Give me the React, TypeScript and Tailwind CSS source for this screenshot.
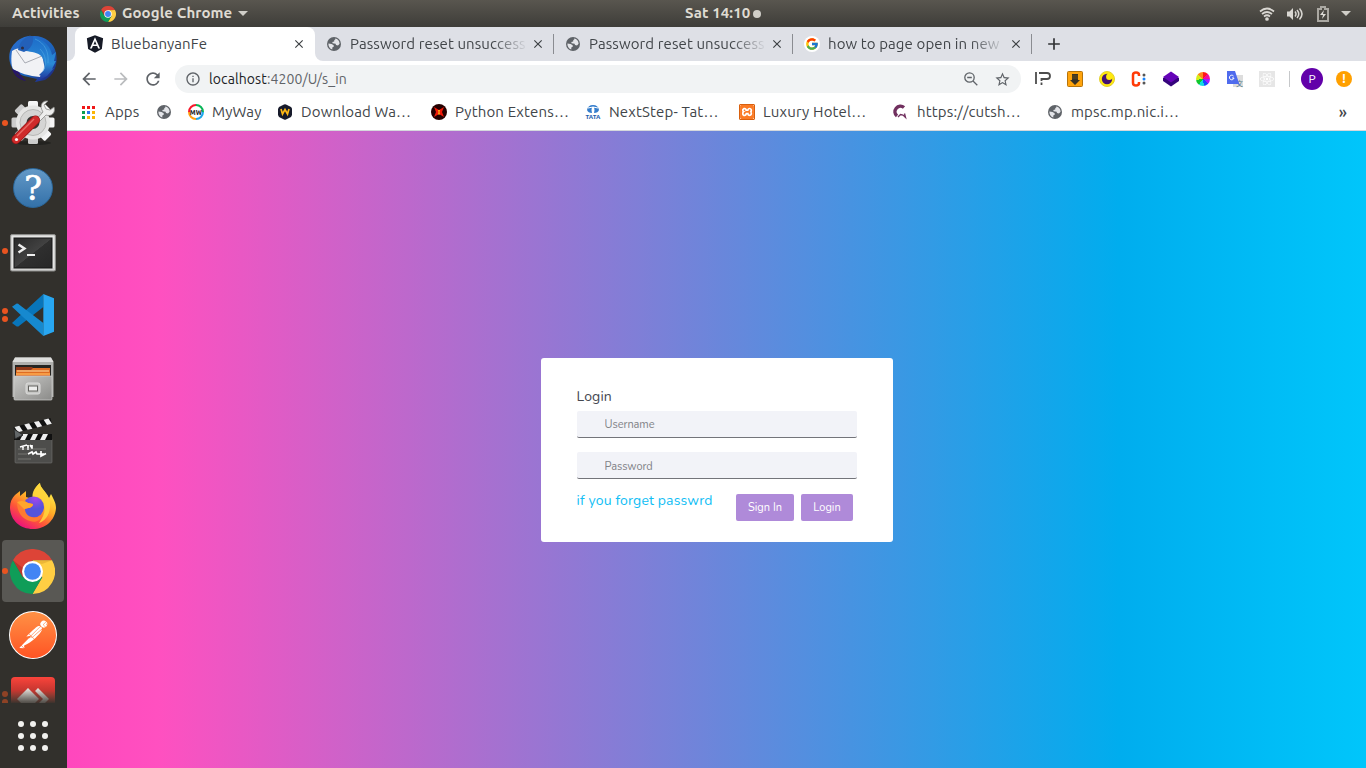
import React, { type ReactNode } from "react";
import { MdArrowBack, MdArrowForward, MdRefresh, MdInfoOutline, MdStarBorder, MdClose, MdAdd } from "react-icons/md";
import { FaAngular, FaReact } from "react-icons/fa";
import { FcGoogle } from "react-icons/fc";
import { SiXampp, SiPostman } from "react-icons/si";

function ChromeLogo({ className }: { className: string }) {
  return (
    <svg viewBox="0 0 48 48" className={className}>
      <path d="M3.2 12A24 24 0 0 1 44.8 12H24L13.6 30Z" fill="#dd4437" />
      <path d="M44.8 12A24 24 0 0 1 24 48L34.4 30L24 12Z" fill="#ffce43" />
      <path d="M24 48A24 24 0 0 1 3.2 12L13.6 30H34.4Z" fill="#0f9d58" />
      <path d="M24 12H44.8L34 16Z" fill="#c98d21" opacity=".35" />
      <path d="M13.6 30L3.2 12L16 22Z" fill="#7d1f19" opacity=".35" />
      <circle cx="24" cy="24" r="11.2" fill="#fff" />
      <circle cx="24" cy="24" r="8.9" fill="#4285f4" />
    </svg>
  );
}

function Globe() {
  return (
    <svg viewBox="0 0 14 14" className="size-3.5">
      <circle cx="7" cy="7" r="7" fill="#5f6368" />
      <path d="M8.2 1.6C10.8 2 12.6 4.2 12.6 6.8L11 8.5L9 8L8.6 6.7L5.6 6.3L5.3 4.9L7.2 4.5L7.3 3L8.3 2.6Z" fill="#e4e5e9" />
      <path d="M1.4 6.4L4.6 7L6.7 8.2V9.8L5.3 10.6V12.4C2.8 11.7 1.2 9 1.4 6.4Z" fill="#e4e5e9" />
    </svg>
  );
}

function Thunderbird() {
  return (
    <svg viewBox="0 0 48 48" className="size-12">
      <defs>
        <linearGradient id="bird" x1="0" y1="0" x2="1" y2="1">
          <stop offset="0" stopColor="#2b6fd0" />
          <stop offset=".6" stopColor="#1c62ba" />
          <stop offset="1" stopColor="#20166b" />
        </linearGradient>
        <linearGradient id="wing" x1="0" y1="0" x2="0" y2="1">
          <stop offset="0" stopColor="#1c6cc9" />
          <stop offset=".6" stopColor="#2b8bd6" />
          <stop offset="1" stopColor="#1f2a94" />
        </linearGradient>
      </defs>
      <path d="M22 .5L19 2C31-2 45 6 47 18C49 29 46 39 36 45L26 47L28 44L15 41L7 38C0 31-2 20 3 12C7 6 12 2 22 .5Z" fill="url(#bird)" />
      <path d="M3 16C7 13 14 12 20 14L33 20L36 34L31 42C20 41 10 38 4 34C2 30 2 23 3 16Z" fill="#f1f2f5" />
      <path d="M7 15L16 28L33 21" fill="none" stroke="#a8abb3" strokeWidth="1" />
      <path d="M10 10C13 3 19 1 24 2C36 4 42 13 43 20L47 17L45 26L47 26L43 34L45 33L38 41L26 47L32 41L30 40L35 35C37 29 35 26 33 22C29 17 22 17 17 16C13 15 10 14 10 10Z" fill="url(#wing)" />
      <path d="M9 15C10 7 16 1 24 1C25 8 22 14 15 17Z" fill="#2360b9" />
      <path d="M26 4C36 8 40 17 39 28M31 14C37 20 38 28 34 36" fill="none" stroke="#55b0e8" strokeWidth="1" opacity=".5" />
      <circle cx="13.5" cy="13" r="1.5" fill="#302c3f" />
      <path d="M3 34L10 37L13 42L17 46C10 45 5 40 3 34Z" fill="#27156a" />
      <path d="M6 38L9 39L12 43Z" fill="#32302c" />
    </svg>
  );
}

function Tools() {
  return (
    <svg viewBox="0 0 46 46" className="size-[46px]">
      <defs>
        <linearGradient id="gear" x1="0" y1="0" x2="0" y2="1">
          <stop offset="0" stopColor="#f7f7f7" />
          <stop offset="1" stopColor="#c9c9c9" />
        </linearGradient>
      </defs>
      <ellipse cx="23" cy="43" rx="18" ry="2" fill="#191917" opacity=".6" />
      {[0, 45, 90, 135].map((angle) => (
        <rect key={angle} x="18" y="1" width="10" height="43" rx="1.5" fill="url(#gear)" transform={`rotate(${angle} 23 22.5)`} />
      ))}
      <circle cx="23" cy="22.5" r="17" fill="#e5e5e4" />
      <circle cx="23" cy="22.5" r="13" fill="#d5d5d4" stroke="#b7b7b5" />
      <circle cx="23" cy="22.5" r="6.5" fill="#363533" />
      <path d="M25 21L33 12C29 6 32 0 38 1L34 5L36 9L40 10L44 7C46 13 41 17 36 15L28 23Z" fill="#eeeeed" stroke="#8a8a88" strokeWidth=".8" />
      <path d="M6 39.500L25.500 20" stroke="#951717" strokeWidth="9" strokeLinecap="round" />
      <path d="M6 39.500L25.500 20" stroke="#cf2b2b" strokeWidth="7.500" strokeLinecap="round" />
      <path d="M7 36L24 19" stroke="#e96a64" strokeWidth="1.5" />
      <circle cx="6.5" cy="39.5" r="1.6" fill="#faf6f5" />
    </svg>
  );
}

function Help() {
  return (
    <div className="mt-0.5 flex size-10 items-center justify-center rounded-full border border-[#2b679b] bg-gradient-to-b from-[#6399c7] to-[#3371a9] font-['DejaVu_Serif',serif] text-[33px] leading-none text-white [-webkit-text-stroke:0.7px_white]">?</div>
  );
}

function Terminal() {
  return (
    <svg viewBox="0 0 46 38" className="mt-1 h-[38px] w-[46px]">
      <defs>
        <linearGradient id="screen" x1="0" y1="0" x2="1" y2="1">
          <stop offset="0" stopColor="#292929" />
          <stop offset=".5" stopColor="#424242" />
          <stop offset=".51" stopColor="#2f2f2f" />
          <stop offset="1" stopColor="#272727" />
        </linearGradient>
      </defs>
      <rect x=".5" y=".5" width="45" height="36.5" rx="1.5" fill="#d2d2d1" stroke="#8b8b89" />
      <rect x="2" y="2" width="42" height="32" fill="#e5e5e4" />
      <rect x="4" y="4" width="38" height="30" fill="url(#screen)" stroke="#171717" />
      <path d="M8.5 10.5L14.5 14.5L8.5 18.5" fill="none" stroke="#eee" strokeWidth="2.4" />
      <path d="M17 21H25" stroke="#eee" strokeWidth="2" />
    </svg>
  );
}

function Code() {
  return (
    <svg viewBox="0 0 126 126" className="size-[42px]">
      <path d="M94 0L0 87L13 97Q18 99 22 95L94 39Z" fill="#0875ba" />
      <path d="M0 38L13 29Q18 28 22 32L94 87V126Z" fill="#1689cf" />
      <path d="M94 0L126 13V113L94 126Z" fill="#28a6f1" />
    </svg>
  );
}

function Files() {
  return (
    <svg viewBox="0 0 42 44" className="h-11 w-[42px]">
      <defs>
        <linearGradient id="drawer" x1="0" y1="0" x2="1" y2="1">
          <stop offset="0" stopColor="#c9c9c7" />
          <stop offset="1" stopColor="#8b8b89" />
        </linearGradient>
      </defs>
      <path d="M3 .5H39L41.5 5V40H.5V5Z" fill="#b0b0ae" />
      <path d="M3 .5H39L41.5 5H.5Z" fill="#dededd" />
      <rect x="3" y="8" width="36" height="11" fill="#252421" />
      <path d="M4 10H20L22 12H38V19H4Z" fill="#8f3718" />
      <path d="M4 13H19L21 11H38V19H4Z" fill="#df6b22" />
      <path d="M5 14H37" stroke="#ffe0a3" />
      <path d="M4 17H38" stroke="#ffac52" strokeWidth="1.5" />
      <rect x="2" y="19" width="38" height="24" rx="1" fill="url(#drawer)" stroke="#d0d0cf" strokeWidth=".7" />
      <rect x="14" y="26" width="14" height="11" rx="2" fill="#c7c7c5" stroke="#dddddc" />
      <rect x="16.5" y="29" width="9" height="5" fill="#ededec" stroke="#62625f" />
    </svg>
  );
}

function Clapper() {
  return (
    <svg viewBox="0 0 42 46" className="-mt-1 h-[46px] w-[42px]">
      <g transform="rotate(-14 3 15)">
        <rect x="3" y="9" width="38" height="6" fill="#111" />
        {[4, 14, 24, 34].map((x) => <path key={x} d={`M${x} 9H${x + 5}L${x + 7} 15H${x + 2}Z`} fill="#eee" />)}
      </g>
      <rect x="3" y="21" width="37" height="24" rx="1" fill="#4d4d4b" stroke="#747472" strokeWidth=".6" />
      <rect x="2" y="16" width="38" height="6" fill="#111" />
      {[8, 18, 28].map((x) => <path key={x} d={`M${x + 3} 16H${x + 8}L${x + 5} 22H${x}Z`} fill="#eee" />)}
      <path d="M2 11L11 17L3 21Z" fill="#626668" stroke="#292929" />
      <path d="M8 29L15 27M11 29V32M16 27V32M18 27L20 30M20 27V31M16 36L20 34L21 36L24 34L25 36H32M29 33V38L34 35.500" fill="none" stroke="#fff" strokeWidth="1.7" />
      <path d="M6 31H34M6 36H15M6 41H19" stroke="#92928f" strokeWidth=".6" />
    </svg>
  );
}

function Firefox() {
  return (
    <svg viewBox="0 0 46 46" className="-mt-0.5 size-[46px]">
      <defs>
        <linearGradient id="fire" x1=".8" y1=".1" x2=".25" y2=".95">
          <stop offset="0" stopColor="#fff04b" />
          <stop offset=".4" stopColor="#ffad27" />
          <stop offset=".7" stopColor="#ff5638" />
          <stop offset="1" stopColor="#ec137b" />
        </linearGradient>
        <radialGradient id="world" cx=".6" cy=".1">
          <stop offset="0" stopColor="#a445ed" />
          <stop offset="1" stopColor="#5554db" />
        </radialGradient>
      </defs>
      <path d="M5 12L10 8V13L16 8V14L23 16C22 9 26 3 30 0C30 5 36 8 39 15L41 11C44 17 46 20 46 25C45 38 35 46 23 46C10 46 0 37 0 24C0 19 2 15 5 12Z" fill="url(#fire)" />
      <path d="M23 16C21 10 25 4 30 0C30 6 38 9 40 19C41 30 36 38 29 40C35 32 38 23 29 14Z" fill="#ffd63c" opacity=".85" />
      <circle cx="23.5" cy="24" r="10.5" fill="url(#world)" />
      <path d="M7 19C11 17 16 18 18 20L23 21C23 25 18 25 15 26C15 34 25 37 32 32C31 38 25 40 20 38C12 36 7 29 7 19Z" fill="#ff7b31" />
      <path d="M7 19C11 17 16 18 18 20L23 21C23 25 18 25 14 26L10 22Z" fill="#ffa62b" />
    </svg>
  );
}

function Postman() {
  return (
    <div className="flex size-12 items-center justify-center rounded-full bg-white">
      <svg className="absolute size-0">
        <linearGradient id="orange" x1="0" y1="0" x2="0" y2="1">
          <stop offset="0" stopColor="#ff9145" />
          <stop offset="1" stopColor="#ff5424" />
        </linearGradient>
      </svg>
      <SiPostman className="size-[46px] shrink-0 fill-[url(#orange)]" />
    </div>
  );
}

const dots = [0, 1, 0, 1, 2, 0, 0, 0, 1, 0];
const launchers = [Thunderbird, Tools, Help, Terminal, Code, Files, Clapper, Firefox, () => <ChromeLogo className="mr-px size-[45px]" />, Postman];

function Dots({ count }: { count: number }) {
  return (
    <div className="flex w-[9px] shrink-0 flex-col items-end gap-[2px] pr-[1px]">
      {Array.from({ length: count }, (_, i) => <span key={i} className="size-1.5 rounded-full bg-[#e95420]" />)}
    </div>
  );
}

function Dock() {
  return (
    <aside className="flex w-[67px] shrink-0 flex-col bg-[#32302c]">
      {launchers.map((Icon, i) => (
        <div key={i} className="h-16 py-px pl-0.5 pr-[3px]">
          <div className={i === 8 ? "flex h-full items-center rounded-[4px] bg-[#595854]" : "flex h-full items-center"}>
            <div className="-ml-0.5 flex items-center">
              <Dots count={dots[i]} />
              <div className="flex w-12 justify-center"><Icon /></div>
            </div>
          </div>
        </div>
      ))}
      <div className="flex h-9 items-start overflow-hidden pt-2.5">
        <div className="pt-3.5 opacity-50"><Dots count={2} /></div>
        <div className="flex w-12 justify-center">
          <div className="flex h-[27px] w-11 items-start justify-center overflow-hidden rounded-t bg-gradient-to-b from-[#fb443b] via-[#c63630] via-50% to-[#32302c]">
            <svg viewBox="0 0 32 32" className="mt-[6px] size-8">
              <defs><linearGradient id="fade" x1="0" y1="0" x2="0" y2="1"><stop offset="0" stopColor="#eeeae4" /><stop offset=".65" stopColor="#55514c" /></linearGradient></defs>
              <path d="M0 16L11 5L22 16L11 27ZM18 8L21 5L32 16L21 27L18 24L26 16Z" fill="url(#fade)" />
            </svg>
          </div>
        </div>
      </div>
      <div className="grid h-[65px] grid-cols-[6px_6px_6px] content-center gap-1.5 pl-[18px]">
        {Array.from({ length: 9 }, (_, i) => <span key={i} className="size-1.5 rounded-full bg-[#f2f1ef]" />)}
      </div>
    </aside>
  );
}

function TopBar() {
  return (
    <header className="flex h-[27px] shrink-0 items-center bg-gradient-to-b from-[#59564f] to-[#3e3d39] text-[15px] font-bold tracking-[0.1px] text-[#dfdbd2]">
      <div className="flex w-[685px] items-center pl-3">
        <span className="w-[88px]">Activities</span>
        <ChromeLogo className="size-4" />
        <span className="ml-1.5 w-[116px]">Google Chrome</span>
        <svg viewBox="0 0 10 5" className="h-[5px] w-2.5"><path d="M0 0H10L5 5Z" fill="#d0cec8" /></svg>
      </div>
      <span className="w-[68px] whitespace-nowrap">Sat 14:10</span>
      <span className="size-2 rounded-full bg-[#d0cec8]" />
      <div className="ml-auto flex items-center pr-[15px]">
        <svg viewBox="0 0 16 14" className="mr-3 h-3.5 w-4 fill-none stroke-[#d9d7d2]" strokeWidth="1.7">
          <path d="M1 4.500Q8-1.500 15 4.500" /><path d="M3 7Q8 3 13 7" /><path d="M5 9.500Q8 7 11 9.500" /><circle cx="8" cy="12" r="1" fill="#d9d7d2" />
        </svg>
        <svg viewBox="0 0 16 14" className="mr-[14px] h-3.5 w-4 fill-none stroke-[#d9d7d2]" strokeWidth="1.5">
          <path d="M0 4.500H2.500L6 1V13L2.500 9.500H0Z" fill="#d9d7d2" stroke="none" /><path d="M8 4.500Q10 7 8 9.500M10 3Q13.500 7 10 11M12.500 1.500Q17.500 7 12.500 12.500" />
        </svg>
        <svg viewBox="0 0 12 16" className="mr-3 h-4 w-3">
          <path d="M1 3H4V1H8V3H11V15H1Z" fill="none" stroke="#aaa8a2" strokeWidth="2" /><path d="M7 4L3 9H6L5 13L9 8H6Z" fill="#dfddd8" />
        </svg>
        <svg viewBox="0 0 10 5" className="h-[5px] w-2.5"><path d="M0 0H10L5 5Z" fill="#d0cec8" /></svg>
      </div>
    </header>
  );
}

function Tab({ icon, label }: { icon: ReactNode; label: string }) {
  return (
    <div className="flex h-full w-[239px] items-center pl-[11px]">
      <span className="flex w-6 items-center">{icon}</span>
      <span className="w-[178px] whitespace-nowrap [mask-image:linear-gradient(to_right,black_80%,transparent)]">{label}</span>
      <MdClose className="ml-[3px] size-[14px] text-[#3c4043]" />
      <span className="ml-auto h-5 w-px bg-[#8a8c91]" />
    </div>
  );
}

function Tabs() {
  return (
    <div className="flex h-[34px] bg-[#dee0e6] text-[15px] tracking-[0.1px]">
      <div className="w-2 bg-white"><div className="h-full rounded-br-lg bg-[#dee0e6]" /></div>
      <div className="flex w-60 items-center rounded-t-lg bg-white pl-2.5">
        <FaAngular className="size-5 text-[#161a26]" />
        <span className="ml-1.5 w-[181px]">BluebanyanFe</span>
        <MdClose className="size-[14px] text-[#3c4043]" />
      </div>
      <div className="flex flex-1 bg-white">
        <div className="flex flex-1 items-center rounded-bl-lg bg-[#dee0e6]">
          <Tab icon={<span className="pl-px"><Globe /></span>} label="Password reset unsuccess" />
          <Tab icon={<span className="pl-px"><Globe /></span>} label="Password reset unsuccess" />
          <Tab icon={<span className="rounded-full bg-white p-px"><FcGoogle className="size-3.5" /></span>} label="how to page open in new" />
          <MdAdd className="ml-3 size-5 text-[#303235]" />
        </div>
      </div>
    </div>
  );
}

function Extension({ children }: { children: ReactNode }) {
  return <span className="flex w-8 shrink-0 justify-center">{children}</span>;
}

function Toolbar() {
  return (
    <div className="flex h-9 items-center pl-1.5 text-[#5f6368]">
      <Extension><MdArrowBack className="size-5" /></Extension>
      <Extension><MdArrowForward className="size-5 text-[#babcbe]" /></Extension>
      <Extension><MdRefresh className="size-5" /></Extension>
      <div className="ml-1.5 flex h-7 w-[846px] items-center rounded-full bg-[#f1f3f4] pl-2.5 pr-2.5">
        <MdInfoOutline className="size-4" />
        <span className="ml-2 text-[14px] tracking-[0.1px]"><span className="text-[#202124]">localhost</span>:4200/U/s_in</span>
        <svg viewBox="0 0 14 14" className="ml-auto size-3.5 fill-none stroke-current" strokeWidth="1.3"><circle cx="5.500" cy="5.500" r="4.700" /><path d="M3.200 5.500H7.800M9 9L13.300 13.300" /></svg>
        <MdStarBorder className="ml-4 size-[17px]" />
      </div>
      <div className="ml-1.5 flex items-center">
        <Extension><svg viewBox="0 0 16 14" className="h-3.5 w-4 fill-none stroke-[#4c4c4c]" strokeWidth="1.8"><path d="M1 0V12" /><path d="M4 1H12Q15 1 15 4Q15 7 12 7H6.500V9" /><path d="M6.500 10.500V13" /></svg></Extension>
        <Extension><svg viewBox="0 0 16 16" className="size-4"><rect x=".5" y=".5" width="15" height="15" rx="1" fill="#ffa40c" stroke="#b6740b" /><path d="M5 3H11V9H13L8 14L3 9H5Z" fill="#383225" /><path d="M5 5H11M5 7H11" stroke="#7b5612" strokeWidth=".7" /></svg></Extension>
        <Extension><svg viewBox="0 0 16 16" className="size-4"><circle cx="8" cy="8" r="7.500" fill="#ffe90d" stroke="#e2cf31" /><circle cx="8" cy="8" r="5.200" fill="#421174" /><circle cx="10.300" cy="5.700" r="3.200" fill="#ffe90d" /></svg></Extension>
        <Extension><svg viewBox="0 0 16 16" className="size-4"><path d="M8 5V4Q8 1.500 5 1.500Q2 1.500 2 4V12Q2 14.500 5 14.500Q8 14.500 8 12V11" fill="none" stroke="#ff3b08" strokeWidth="2.5" /><circle cx="13" cy="4" r="1.500" fill="#555" /><circle cx="13" cy="8" r="1.500" fill="#1784ff" /><circle cx="13" cy="12" r="1.500" fill="#555" /></svg></Extension>
        <Extension><svg viewBox="0 0 16 16" className="size-4"><path d="M0 7L8 4L16 7V10L8 15.500L0 10Z" fill="#35047c" /><path d="M0 6L8 .5L16 6L8 11.500Z" fill="#6504b8" /></svg></Extension>
        <Extension><span className="size-3.5 rounded-full bg-[conic-gradient(#ff1717_0_12%,#f10b9d_12%_24%,#a519ff_24%_36%,#174aff_36%_48%,#10dcdf_48%_60%,#11c82d_60%_73%,#d8ed19_73%_87%,#ff861e_87%)]" /></Extension>
        <Extension><span className="relative flex size-4 items-end justify-end"><span className="flex h-3 w-2.5 items-end justify-end bg-[#ddd] font-['Noto_Sans_CJK_SC',sans-serif] text-[7px] leading-none text-[#59818b]">文</span><svg viewBox="0 0 16 16" className="absolute inset-0 size-4"><path d="M0 0H8L13 15L11 13H0Z" fill="#4f6bed" /><path d="M6.500 5A2.300 2.300 0 1 0 7 7H5" fill="none" stroke="#fff" /></svg></span></Extension>
        <Extension><span className="bg-[#e6e6e6] p-px"><FaReact className="size-3.5 text-white" /></span></Extension>
      </div>
      <span className="ml-1.5 h-4 w-px bg-[#c6c8ca]" />
      <span className="ml-[11px] flex size-[22px] items-center justify-center rounded-full bg-[#6200a9] text-[12px] text-white">P</span>
      <span className="ml-[13px] flex size-4 items-center justify-center rounded-full bg-[#ffa000] text-[12px] font-bold text-white">!</span>
    </div>
  );
}

function Bookmark({ icon, label, width }: { icon: ReactNode; label?: string; width: string }) {
  return (
    <div className={`flex shrink-0 items-center ${width}`}>
      <span className="flex w-4 shrink-0 justify-center">{icon}</span>
      {label && <span className="ml-2 whitespace-nowrap">{label}</span>}
    </div>
  );
}

const appColors = ["bg-[#f01818]", "bg-[#f01818]", "bg-[#f01818]", "bg-[#0aa04f]", "bg-[#2a76ee]", "bg-[#fbb605]", "bg-[#0aa04f]", "bg-[#fbb605]", "bg-[#fbb605]"];

function Bookmarks() {
  return (
    <nav className="flex h-[34px] items-center border-b border-[#d5d8dc] pb-[3px] pl-3.5 text-[15px] tracking-[0.15px]">
      <Bookmark width="w-[75px]" label="Apps" icon={<span className="-ml-0.5 grid grid-cols-3 gap-0.5">{appColors.map((c, i) => <i key={i} className={`size-[3px] ${c}`} />)}</span>} />
      <Bookmark width="w-8" icon={<Globe />} />
      <Bookmark width="w-[89px]" label="MyWay" icon={<svg viewBox="0 0 16 16" className="size-4"><path d="M1 8A7 7 0 0 1 8 1" fill="none" stroke="#f7192c" strokeWidth="2" /><path d="M8 1A7 7 0 0 1 15 8" fill="none" stroke="#08b657" strokeWidth="2" /><path d="M15 8A7 7 0 0 1 8 15" fill="none" stroke="#1da7e9" strokeWidth="2" /><path d="M8 15A7 7 0 0 1 1 8" fill="none" stroke="#ff9f10" strokeWidth="2" /><text x="8" y="10.500" textAnchor="middle" fontSize="6.500" fontWeight="900" fill="#222">MW</text></svg>} />
      <Bookmark width="w-[154px]" label="Download Wa…" icon={<svg viewBox="0 0 16 16" className="size-4"><path d="M7 .5Q8 0 9 .5L14 3Q15 4 15 5V11L14 13L9 15.500Q8 16 7 15.500L2 13L1 11V5L2 3Z" fill="#171b2b" /><path d="M4 5L5.500 10L8 5.500L10.500 10L12 5" fill="none" stroke="#ffb915" strokeWidth="1.700" /></svg>} />
      <Bookmark width="w-[154px]" label="Python Extens…" icon={<svg viewBox="0 0 16 16" className="size-4"><circle cx="8" cy="8" r="8" fill="#250000" /><path d="M3 3L8 6L13 3L11 8L13 13L8 10L3 13L5 8Z" fill="#f01808" /><path d="M7 6H9L8.500 8L9 10.500H7L7.500 8Z" fill="#ffb416" /></svg>} />
      <Bookmark width="w-[154px]" label="NextStep- Tat…" icon={<svg viewBox="0 0 16 16" className="size-4"><path d="M2 6Q3 1 8 1Q13 1 14 6Q13 9 9 9Q10 6 9 3H7Q6 6 7 9Q3 9 2 6Z" fill="#347dcc" /><path d="M3 4Q8 2 13 4" stroke="#fff" fill="none" /><text x="8" y="15" textAnchor="middle" fontSize="6" fontWeight="900" fill="#1e60ae">TATA</text></svg>} />
      <Bookmark width="w-[154px]" label="Luxury Hotel…" icon={<span className="rounded-[1px] border border-[#d9600e] bg-white"><SiXampp className="size-3.5 text-[#fb7a24]" /></span>} />
      <Bookmark width="w-[154px]" label="https://cutsh…" icon={<svg viewBox="0 0 16 16" className="-ml-0.5 size-4"><path d="M12 3.500A5.300 5.300 0 1 0 5 12" fill="none" stroke="#71305f" strokeWidth="3.500" /><path d="M6 13L8.500 10.500L11 11L13.500 13.500L12.500 9.500" fill="none" stroke="#71305f" strokeWidth="1.300" /></svg>} />
      <Bookmark width="w-[140px]" label="mpsc.mp.nic.i…" icon={<Globe />} />
      <span className="ml-auto pr-[19px] text-[16px] leading-none font-medium">»</span>
    </nav>
  );
}

function LoginPage() {
  return (
    <main className="flex flex-1 items-start justify-center bg-[linear-gradient(90deg,#ff47bd_0%,#ff50c0_7%,#00adee_81%,#00c6fb_100%)] pt-[227px] font-['Nunito','Noto_Sans',sans-serif]">
      <form className="flex h-[184px] w-[352px] flex-col rounded-[3px] bg-white px-9 pt-[29px]">
        <h1 className="h-6 text-[14px] leading-5 tracking-[0.15px] text-[#454851]">Login</h1>
        <input className="h-[27px] rounded-[2px] border-b border-[#73747a] bg-[#f2f3f8] pl-[28px] text-[11px] tracking-[-0.05px] placeholder:text-[#818287]" placeholder="Username" />
        <input type="password" className="mt-3.5 h-[27px] rounded-[2px] border-b border-[#73747a] bg-[#f2f3f8] pt-0.5 pl-[28px] text-[11px] tracking-[-0.05px] placeholder:text-[#818287]" placeholder="Password" />
        <div className="mt-[15px] flex items-start">
          <a className="w-[159px] text-[14px] leading-[14px] tracking-[0.15px] whitespace-nowrap text-[#10bef5]">if you forget passwrd</a>
          <button type="button" className="h-[27px] w-[58px] rounded-[2px] bg-[#af8ad9] pt-px pl-px text-[11px] text-white">Sign In</button>
          <button type="button" className="ml-[7px] h-[27px] w-[52px] rounded-[2px] bg-[#af8ad9] pt-px pl-px text-[11px] text-white">Login</button>
        </div>
      </form>
    </main>
  );
}

export default function App() {
  return (
    <div className="flex h-screen w-screen flex-col overflow-hidden bg-white font-['Ubuntu','Noto_Sans',sans-serif] text-[#414549]">
      <TopBar />
      <div className="flex min-h-0 flex-1">
        <Dock />
        <div className="flex min-w-0 flex-1 flex-col">
          <Tabs />
          <Toolbar />
          <Bookmarks />
          <LoginPage />
        </div>
      </div>
    </div>
  );
}
